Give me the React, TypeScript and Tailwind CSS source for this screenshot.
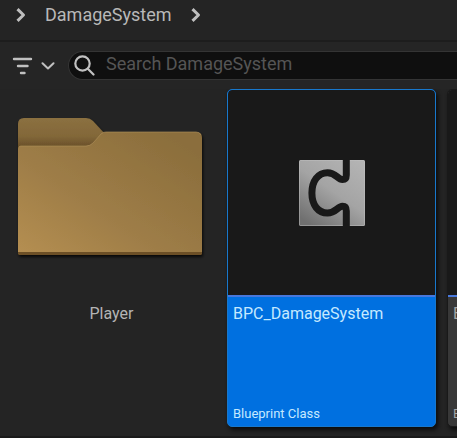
import React from 'react';

function Chevron({ className = '', down = false }: { className?: string; down?: boolean }) {
  return (
    <svg
      className={className}
      viewBox={down ? '0 0 14 8' : '0 0 10 14'}
      fill="none"
      stroke="currentColor"
      strokeLinecap={down ? 'round' : 'butt'}
      strokeLinejoin="round"
      aria-hidden="true"
    >
      <path d={down ? 'M1.5 1.2 7 6.5l5.5-5.3' : 'M1.5 1.2 7.5 7l-6 5.800'} strokeWidth={down ? 2 : 3} />
    </svg>
  );
}

function FolderIcon() {
  return (
    <svg className="h-[146px] w-[192px]" viewBox="0 0 192 146" aria-hidden="true">
      <defs>
        <linearGradient id="folderBack" x1="0" y1="0" x2="0" y2="1">
          <stop offset="0" stopColor="#8b7040" />
          <stop offset="0.6" stopColor="#836839" />
          <stop offset="1" stopColor="#664d27" />
        </linearGradient>
        <linearGradient id="folderFront" x1="0" y1="1" x2="0.9" y2="0.1">
          <stop offset="0" stopColor="#b58f52" />
          <stop offset="0.45" stopColor="#9e7d47" />
          <stop offset="1" stopColor="#8b6e3c" />
        </linearGradient>
        <filter id="folderShadow" x="-5%" y="-5%" width="112%" height="115%">
          <feDropShadow dx="1" dy="2" stdDeviation="1.5" floodColor="#000" floodOpacity="0.8" />
        </filter>
      </defs>
      <g filter="url(#folderShadow)">
        <path d="M2 30V8q0-6 6-6h62q4 0 7 3l11 12-12 15H2z" fill="url(#folderBack)" />
        <path d="M2 33q0-3 3-3h65q4 0 7-3l8-9q2-2 5-2h90q6 0 6 6v114q0 3-3 3H5q-3 0-3-3z" fill="url(#folderFront)" />
        <path d="M3 31q1-1 2-1h65q4 0 7-3l8-9q2-2 5-2h90q4 0 5 3" fill="none" stroke="#b2935c" strokeOpacity="0.6" />
        <path d="M2 136h184v1q0 2-3 2H5q-3 0-3-2z" fill="#6c4f25" />
      </g>
    </svg>
  );
}

function BlueprintIcon() {
  return (
    <svg className="size-[66px]" viewBox="0 0 66 66" aria-hidden="true">
      <defs>
        <linearGradient id="metal" x1="0.9" y1="0" x2="0.2" y2="1">
          <stop offset="0" stopColor="#b4b4b4" />
          <stop offset="0.5" stopColor="#a4a4a4" />
          <stop offset="1" stopColor="#707070" />
        </linearGradient>
      </defs>
      <rect width="66" height="66" rx="1.5" fill="url(#metal)" />
      <rect x="0.5" y="0.5" width="65" height="65" rx="1" fill="none" stroke="#c4c4c4" strokeOpacity="0.45" />
      <path
        d="M47.3-1V15Q47.3 19.500 43.500 19.500C38.500 19.500 37 12.700 28.500 12.700C19 12.700 12.900 21 12.900 33S19 53 28.500 53C37 53 38.500 46.300 43.500 46.300Q47.300 46.300 47.300 51V67"
        fill="none"
        stroke="#191919"
        strokeWidth="7"
      />
    </svg>
  );
}

function FolderTile({ name }: { name: string }) {
  return (
    <button type="button" className="flex w-[209px] shrink-0 flex-col items-center pt-[27px]">
      <FolderIcon />
      <span className="mt-[42px] text-base leading-5 text-[#b4b4b4]">{name}</span>
    </button>
  );
}

function AssetTile({ name, kind, selected = false }: { name: string; kind: string; selected?: boolean }) {
  return (
    <button
      type="button"
      className={`flex h-[338px] w-[209px] shrink-0 flex-col overflow-hidden rounded-[5px] border text-left shadow-[2px_3px_4px_#0b0b0b] ${
        selected ? 'border-[#1878cc] bg-[#0070e0]' : 'border-[#191919] bg-[#383838]'
      }`}
    >
      <span className="flex h-[205px] w-full shrink-0 items-center justify-center rounded-t-[4px] bg-[#191919]">
        <BlueprintIcon />
      </span>
      <span className="h-[2px] w-full shrink-0 bg-[#4878dc]" />
      <span
        className={`flex w-full grow flex-col justify-between px-[5px] pt-[7px] pb-1 ${
          selected ? 'text-[#c5e9ff]' : 'text-[#a5a5a5]'
        }`}
      >
        <span className="text-base leading-5">{name}</span>
        <span className="text-[13px] leading-4">{kind}</span>
      </span>
    </button>
  );
}

export default function App() {
  return (
    <div className="flex min-h-screen flex-col overflow-hidden bg-[#242424] font-['Roboto',sans-serif]">
      <nav aria-label="Path" className="flex h-[42px] items-start gap-[19px] border-b-2 border-[#1d1d1d] pt-[3px] pl-4 text-[#bebebe]">
        <span className="flex h-6 items-center">
          <Chevron className="h-[14px] w-[10px]" />
        </span>
        <a href="#damage-system" className="text-lg leading-6 text-[#b8b8b8]">
          DamageSystem
        </a>
        <span className="flex h-6 items-center">
          <Chevron className="h-[14px] w-[10px]" />
        </span>
      </nav>

      <div className="flex h-[47px] items-center bg-[#252525] pl-3 text-[#c0c0c0]">
        <button type="button" aria-label="Filters" className="flex items-center gap-2">
          <svg className="h-[18px] w-[21px]" viewBox="0 0 21 18" fill="none" stroke="currentColor" strokeWidth="2.4" strokeLinecap="round" aria-hidden="true">
            <path d="M2 2h17M6 9h9.500M9 16h3.500" />
          </svg>
          <Chevron down className="h-2 w-[14px]" />
        </button>
        <label className="ml-[13px] flex h-[29px] min-w-0 grow items-center gap-[11px] rounded-l-full border border-r-0 border-[#343434] bg-[#0f0f0f] pl-[5px]">
          <svg className="size-[21px] shrink-0" viewBox="0 0 21 21" fill="none" stroke="currentColor" strokeWidth="2.2" strokeLinecap="round" aria-hidden="true">
            <circle cx="8.5" cy="8.5" r="7.2" />
            <path d="m13.800 13.800 5.700 5.700" />
          </svg>
          <input
            type="text"
            aria-label="Search DamageSystem"
            placeholder="Search DamageSystem"
            className="h-full min-w-0 grow bg-transparent pb-1 text-lg leading-6 text-[#c0c0c0] outline-none placeholder:text-[#555555]"
          />
        </label>
      </div>

      <main className="flex grow gap-[11px] overflow-hidden border-b-2 border-[#1a1a1a] pb-[9px] pl-[7px]">
        <FolderTile name="Player" />
        <AssetTile name="BPC_DamageSystem" kind="Blueprint Class" selected />
        <AssetTile name="BP_Damage" kind="Blueprint Class" />
      </main>
    </div>
  );
}
